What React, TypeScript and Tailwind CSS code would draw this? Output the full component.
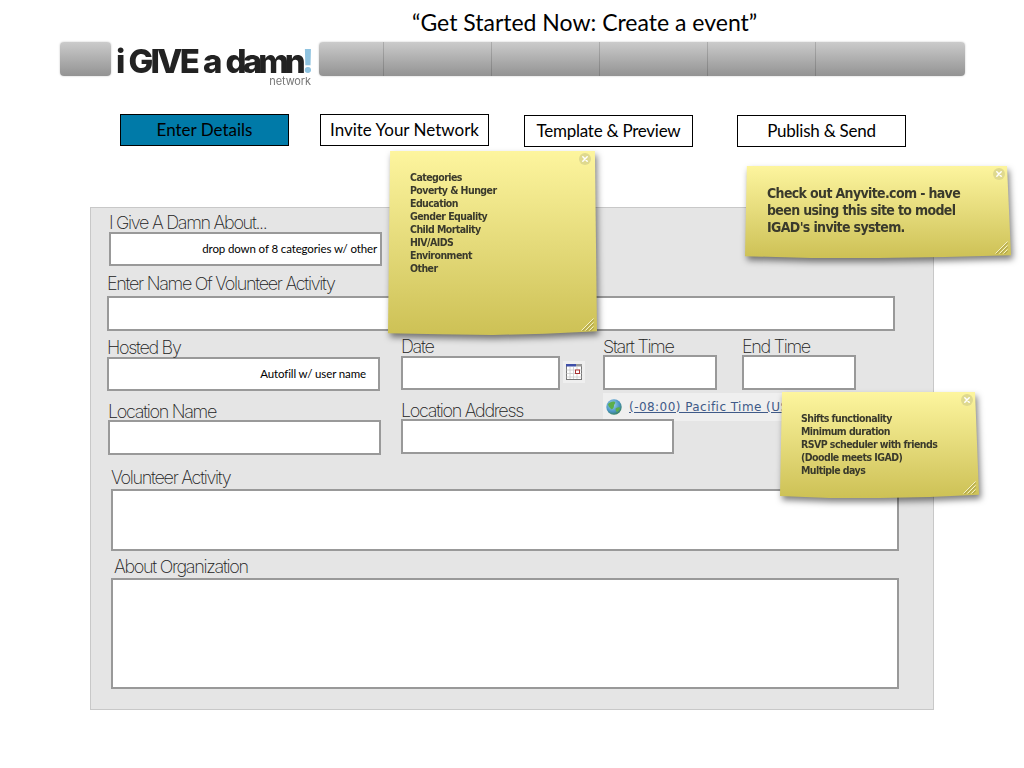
import React from "react";

const gill = "font-['Lato',sans-serif]";
const light = "font-['Inter',sans-serif] font-extralight text-[18px] leading-[18px] tracking-[-1.3px] text-[#222] h-[18px] whitespace-nowrap";
const boxBase = "bg-white border-2 border-[#999] flex items-center justify-end";
const note = "text-[11.5px] tracking-[-0.12px] text-black whitespace-nowrap " + gill;

function Field(props: { label: string; outer: string; labelCls?: string; box: string; children?: React.ReactNode }) {
  return (
    <div className={props.outer}>
      <div className={light + " " + (props.labelCls ?? "")}>{props.label}</div>
      <div className={boxBase + " " + props.box}>{props.children}</div>
    </div>
  );
}

function Close() {
  return (
    <svg width="12" height="12" viewBox="0 0 12 12" className="absolute top-[2px] right-[6px]">
      <circle cx="6" cy="6" r="6" fill="#dfd98f" />
      <path d="M3.8 3.8l4.4 4.4M8.2 3.8l-4.4 4.4" stroke="#fff" strokeWidth="1.5" strokeLinecap="round" />
    </svg>
  );
}

function Grip() {
  return (
    <svg width="13" height="13" viewBox="0 0 13 13" className="absolute bottom-[4px] right-[3px]">
      <path d="M0.5 12.5L12.5 0.5M4.5 12.5L12.5 4.5M8.5 12.5L12.5 8.5" stroke="#f6f2c8" strokeWidth="1" />
      <path d="M1.5 13L13 1.5M5.5 13L13 5.5M9.5 13L13 9.5" stroke="#8f873e" strokeWidth="0.7" />
    </svg>
  );
}

function Sticky(props: { outer: string; inner: string; lines: string[]; text: string }) {
  return (
    <div className={"absolute drop-shadow-[2px_4px_3px_rgba(0,0,0,0.5)] " + props.outer}>
      <div className={"relative w-full h-full bg-gradient-to-b from-[#fdf59e] to-[#cdc155] text-[#3a3a2c] font-['DejaVu_Sans',sans-serif] [font-stretch:condensed] font-bold " + props.inner + " " + props.text}>
        {props.lines.map((l) => (
          <div key={l} className="whitespace-nowrap">{l}</div>
        ))}
        <Close />
        <Grip />
      </div>
    </div>
  );
}

function Calendar() {
  return (
    <div className="w-[22px] h-[22px] bg-[#efefef] flex items-center justify-center ml-[3px] mt-[5px]">
      <svg width="16" height="16" viewBox="0 0 16 16">
        <rect x="0.5" y="0.5" width="15" height="15" fill="#fff" stroke="#777" />
        <rect x="0" y="0" width="10" height="2.5" fill="#3f4fa8" />
        <rect x="10" y="0" width="6" height="2.5" fill="#999" />
        <path d="M0.5 6h15M0.5 9.5h15M0.5 13h15M4 3v12M7.5 3v12M11 3v12" stroke="#ccc" strokeWidth="0.8" />
        <rect x="9.5" y="6" width="4" height="3.5" fill="#fff" stroke="#a33" />
      </svg>
    </div>
  );
}

function Globe() {
  return (
    <svg width="16" height="16" viewBox="0 0 16 16" className="shrink-0">
      <defs>
        <radialGradient id="globeFill" cx="0.4" cy="0.35" r="0.75">
          <stop offset="0" stopColor="#a5d8f0" />
          <stop offset="0.6" stopColor="#4b94c4" />
          <stop offset="1" stopColor="#2f7a3c" />
        </radialGradient>
      </defs>
      <circle cx="8" cy="8" r="7.7" fill="url(#globeFill)" />
      <path d="M2 5c2-2 5-3 7-2 1 1-1 2-1 4s-2 4-3 3-3-3-3-5z" fill="#5cae4b" />
      <path d="M10 9c2-1 4-1 4 0s-2 4-3 4-2-3-1-4z" fill="#5cae4b" />
    </svg>
  );
}

export default function App() {
  const dividers = ["w-[65px]", "w-[108px]", "w-[108px]", "w-[108px]", "w-[108px]"];
  const grad = "bg-gradient-to-b from-[#cbcbcb] to-[#939393] rounded-[4px] h-[34px] shadow-[0_0_2px_rgba(0,0,0,0.25)]";
  const step = "w-[169px] h-[32px] border border-black flex items-center justify-center text-[17px] text-black whitespace-nowrap " + gill;
  return (
    <div className="relative w-[1024px] h-[768px] bg-white overflow-hidden">
      <div className={"h-[42px] pl-[412px] text-[23px] leading-[44px] text-black whitespace-nowrap " + gill}>
        “Get Started Now: Create a event”
      </div>

      <div className="flex h-[34px] pl-[60px]">
        <div className={"w-[51px] " + grad} />
        <div className="relative w-[197px] ml-[5px] h-[34px] font-['Inter',sans-serif] font-extrabold text-[33px] leading-[38px] tracking-[-2.8px] text-[#222] whitespace-nowrap blur-[0.4px] [word-spacing:1.5px]">
          i GIVE a <span className="tracking-[-3.9px]">damn</span><span className="text-[#8fc3e0]">!</span>
          <span className="absolute right-[2px] top-[34px] font-['Inter',sans-serif] font-normal text-[11px] leading-[10px] tracking-[-0.1px] text-[#777]">network</span>
        </div>
        <div className={"flex w-[646px] ml-[6px] " + grad}>
          {dividers.map((d, i) => (
            <div key={i} className={"h-full border-r border-black/15 " + d} />
          ))}
        </div>
      </div>

      <div className="flex items-start pl-[120px] mt-[38px]">
        <div className={step + " bg-[#007aa8]"}>Enter Details</div>
        <div className={step + " ml-[31px]"}>Invite Your Network</div>
        <div className={step + " ml-[35px] mt-[1px] tracking-[-0.25px]"}>Template &amp; Preview</div>
        <div className={step + " ml-[44px] mt-[1px] tracking-[-0.25px]"}>Publish &amp; Send</div>
      </div>

      <div className="ml-[90px] mt-[60px] w-[844px] h-[503px] bg-[#e5e5e5] border border-[#c8c8c8] pl-[16px] pt-[6px]">
        <Field label="I Give A Damn About..." outer="ml-[2px] w-[273px]" box="h-[34px] pr-[3px]">
          <span className={note}>drop down of 8 categories w/ other</span>
        </Field>

        <div className="mt-[9px] w-[788px]">
          <div className={light + " mb-[3px]"}>Enter Name Of Volunteer Activity</div>
          <div className={boxBase + " h-[35px]"} />
        </div>

        <div className="flex items-start mt-[6px]">
          <Field label="Hosted By" outer="mt-[2px] w-[273px]" box="h-[34px] pr-[12px]">
            <span className={note}>Autofill w/ user name</span>
          </Field>
          <div className="ml-[21px] mt-[1px]">
            <div className={light}>Date</div>
            <div className="flex items-start">
              <div className={boxBase + " w-[159px] h-[34px]"} />
              <Calendar />
            </div>
          </div>
          <Field label="Start Time" outer="ml-[18px] w-[114px]" labelCls="pt-[1px]" box="h-[35px]" />
          <Field label="End Time" outer="ml-[25px] w-[114px]" labelCls="pt-[1px]" box="h-[35px]" />
        </div>

        <div className="flex items-start">
          <Field label="Location Name" outer="mt-[11px] ml-[1px] w-[273px]" labelCls="pt-[1px]" box="h-[35px]" />
          <Field label="Location Address" outer="mt-[10px] ml-[20px] w-[273px] relative z-10" labelCls="pt-[1px]" box="h-[35px]" />
          <div className="ml-[-71px] mt-[2px] w-[190px] h-[28px] bg-[#efefef] flex items-center pl-[3px] overflow-hidden">
            <Globe />
            <span className="ml-[7px] font-['DejaVu_Sans',sans-serif] text-[12px] tracking-[0.45px] text-[#3f5a88] underline whitespace-nowrap">(-08:00) Pacific Time (US &amp; Canada)</span>
          </div>
        </div>

        <div className="ml-[4px] mt-[14px] w-[788px]">
          <div className={light + " mb-[2px]"}>Volunteer Activity</div>
          <div className={boxBase + " h-[62px]"} />
        </div>

        <div className="ml-[4px] mt-[7px] w-[788px]">
          <div className={light + " ml-[3px] mb-[2px]"}>About Organization</div>
          <div className={boxBase + " h-[111px]"} />
        </div>
      </div>

      <Sticky
        outer="left-[388px] top-[151px] w-[209px] h-[184px]"
        inner="[clip-path:polygon(1%_0,99%_0,100%_98%,75%_99.3%,50%_100%,25%_99.6%,0_99%)] pl-[22px] pt-[20px]"
        text="text-[10.5px] leading-[13px] tracking-[-0.55px]"
        lines={["Categories", "Poverty & Hunger", "Education", "Gender Equality", "Child Mortality", "HIV/AIDS", "Environment", "Other"]}
      />
      <Sticky
        outer="left-[745px] top-[166px] w-[266px] h-[92px]"
        inner="[clip-path:polygon(0.7%_0,98.5%_0,100%_97%,75%_99%,50%_100%,25%_100%,0_98%)] pl-[22px] pt-[19px]"
        text="text-[14px] leading-[17px] tracking-[-0.65px]"
        lines={["Check out Anyvite.com - have", "been using this site to model", "IGAD's invite system."]}
      />
      <Sticky
        outer="left-[780px] top-[392px] w-[199px] h-[106px]"
        inner="[clip-path:polygon(1%_0,98%_0,100%_97%,75%_99%,50%_100%,25%_100%,0_98%)] pl-[21px] pt-[20px]"
        text="text-[10.5px] leading-[13px] tracking-[-0.55px]"
        lines={["Shifts functionality", "Minimum duration", "RSVP scheduler with friends", "(Doodle meets IGAD)", "Multiple days"]}
      />
    </div>
  );
}
